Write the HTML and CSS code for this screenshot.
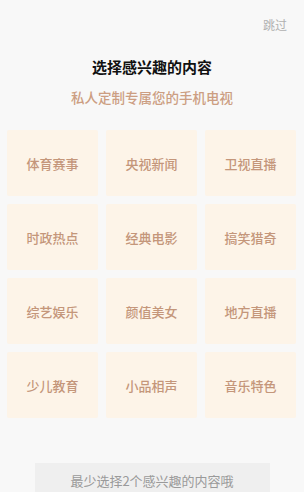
FILE: index.html
```html
<!DOCTYPE html>
<html lang="zh">
<head>
<meta charset="utf-8">
<link rel="stylesheet" href="styles.css">
</head>
<body>
<div class="page">
  <div class="top"><span class="skip">跳过</span></div>
  <h1 class="title">选择感兴趣的内容</h1>
  <p class="subtitle">私人定制专属您的手机电视</p>
  <div class="grid">
    <div class="card">体育赛事</div>
    <div class="card">央视新闻</div>
    <div class="card">卫视直播</div>
    <div class="card">时政热点</div>
    <div class="card">经典电影</div>
    <div class="card">搞笑猎奇</div>
    <div class="card">综艺娱乐</div>
    <div class="card">颜值美女</div>
    <div class="card">地方直播</div>
    <div class="card">少儿教育</div>
    <div class="card">小品相声</div>
    <div class="card">音乐特色</div>
  </div>
  <div class="footer"><div class="btn">最少选择2个感兴趣的内容哦</div></div>
</div>
</body>
</html>
```
FILE: styles.css
```css
html, body {
  margin: 0;
  padding: 0;
  background: #f8f8f8;
  font-family: "Noto Sans CJK SC", "Noto Sans", sans-serif;
  overflow: hidden;
}
.page {
  width: 304px;
  height: 492px;
  overflow: hidden;
}
.top {
  display: flex;
  justify-content: flex-end;
  padding: 18px 17px 0 0;
  height: 14px;
}
.skip {
  font-size: 12px;
  line-height: 14px;
  color: #b0b0b0;
}
.title {
  margin: 25px 0 0;
  font-size: 15px;
  line-height: 20px;
  font-weight: 600;
  color: #111;
  text-align: center;
}
.subtitle {
  margin: 10px 0 0;
  font-size: 13.5px;
  line-height: 20px;
  font-weight: 500;
  color: #cc9e82;
  text-align: center;
}
.grid {
  margin: 23px 0 0 7px;
  display: grid;
  grid-template-columns: repeat(3, 91px);
  grid-auto-rows: 66px;
  column-gap: 8px;
  row-gap: 8px;
}
.card {
  background: #fdf4e8;
  border-radius: 2px;
  display: flex;
  align-items: center;
  justify-content: center;
  font-size: 13px;
  color: #c4967a;
  font-weight: 500;
}
.footer {
  display: flex;
  justify-content: center;
  margin-top: 45px;
}
.btn {
  width: 235px;
  height: 34px;
  background: #efefef;
  color: #9a9a9a;
  font-size: 13px;
  display: flex;
  align-items: center;
  justify-content: center;
}
```
